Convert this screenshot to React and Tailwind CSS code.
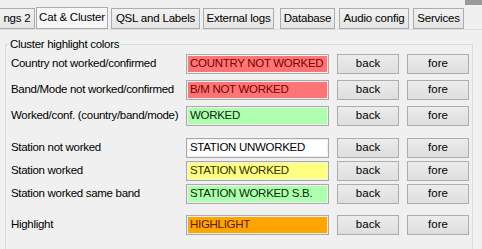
import React from "react";

const tabs = [
  { label: "ngs 2", cls: "ml-[-1px] w-[36px]", active: false },
  { label: "Cat & Cluster", cls: "ml-[1px] w-[72px]", active: true },
  { label: "QSL and Labels", cls: "ml-[3px] w-[89px]", active: false },
  { label: "External logs", cls: "ml-[3px] w-[71px]", active: false },
  { label: "Database", cls: "ml-[6px] w-[55px]", active: false },
  { label: "Audio config", cls: "ml-[4px] w-[70px]", active: false },
  { label: "Services", cls: "ml-[4px] w-[51px]", active: false },
];

function Btn({ children }) {
  return (
    <div className="w-[62px] h-[20px] flex items-center justify-center border border-[#adadad] bg-gradient-to-b from-[#ececec] to-[#dedede] text-black">
      {children}
    </div>
  );
}

function Row({ label, text, bg, color }) {
  return (
    <div className="flex items-center h-[20px]">
      <div className="w-[181px] pl-[6px] whitespace-nowrap tracking-[-0.3px] text-[11.5px]">{label}</div>
      <div className="w-[143px] h-[20px] border border-[#a9a9a9] p-[1px]">
        <div className={`w-full h-full ${bg} ${color} flex items-center pl-[2px] whitespace-nowrap text-[11.5px] tracking-[-0.3px]`}>{text}</div>
      </div>
      <div className="w-[8px]" />
      <Btn>back</Btn>
      <div className="w-[8px]" />
      <Btn>fore</Btn>
    </div>
  );
}

export default function App() {
  return (
    <div
      className="w-[482px] h-[249px] bg-[#f0f0f0] text-[11.5px] text-black overflow-hidden relative"
      style={{ fontFamily: '"Liberation Sans", Arial, sans-serif' }}
    >
      <div className="absolute right-0 top-0 w-[17px] h-[5px] bg-[#9a9a9a]" />
      {/* tab strip */}
      <div className="flex items-end h-[29px]">
        {tabs.map((t) => (
          <div
            key={t.label}
            className={`${t.cls} ${t.active ? "h-[22px]" : "h-[21px]"} shrink-0 flex items-center justify-center border border-[#acacac] whitespace-nowrap tracking-[-0.2px] ${
              t.active ? "bg-[#f7f7f7]" : "bg-gradient-to-b from-[#f2f2f2] to-[#e4e4e4]"
            }`}
          >
            {t.label}
          </div>
        ))}
      </div>
      {/* tab page */}
      <div className="border-t border-[#dcdcdc] bg-[#f0f0f0] pt-[7px] h-[220px]">
        <div className="relative ml-[5px] w-[468px] h-[230px] border border-[#dcdcdc] mt-[7px]">
          <div className="absolute left-[3px] top-[-8px] px-[1px] bg-[#f0f0f0] leading-[14px] tracking-[-0.3px]">
            Cluster highlight colors
          </div>
          <div className="ml-[-1px] mt-[9px] flex flex-col">
            <Row label="Country not worked/confirmed" text="COUNTRY NOT WORKED" bg="bg-[#ff7575]" color="text-[#7a0000]" />
            <div className="h-[6px]" />
            <Row label="Band/Mode not worked/confirmed" text="B/M NOT WORKED" bg="bg-[#ff7575]" color="text-[#7a0000]" />
            <div className="h-[6px]" />
            <Row label="Worked/conf. (country/band/mode)" text="WORKED" bg="bg-[#b0ffb0]" color="text-[#003000]" />
            <div className="h-[12px]" />
            <Row label="Station not worked" text="STATION UNWORKED" bg="bg-white" color="text-black" />
            <div className="h-[3px]" />
            <Row label="Station worked" text="STATION WORKED" bg="bg-[#ffff80]" color="text-[#303000]" />
            <div className="h-[3px]" />
            <Row label="Station worked same band" text="STATION WORKED S.B." bg="bg-[#b0ffb0]" color="text-[#003000]" />
            <div className="h-[11px]" />
            <Row label="Highlight" text="HIGHLIGHT" bg="bg-[#ffa500]" color="text-[#5a1a00]" />
          </div>
        </div>
      </div>
    </div>
  );
}
